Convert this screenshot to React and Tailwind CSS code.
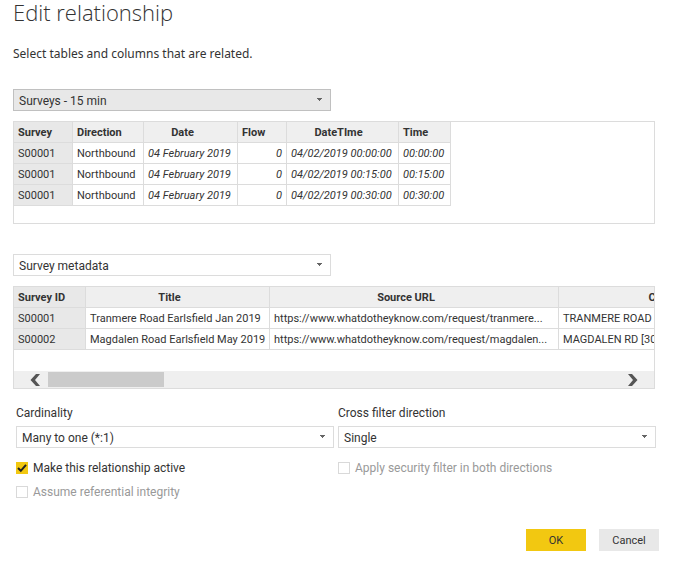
import React, { useState } from "react";
import clsx from "clsx";

const surveyColumns = [
  { name: "Survey", width: "w-[59px]", head: "text-left" },
  { name: "Direction", width: "w-[71px]", head: "text-left" },
  { name: "Date", width: "w-[94px]", head: "text-center pr-5" },
  { name: "Flow", width: "w-[49px]", head: "text-left", cell: "text-right" },
  { name: "DateTIme", width: "w-[112px]", head: "text-center pr-3" },
  { name: "Time", width: "w-[52px]", head: "text-left" },
];

const surveyRows = [
  ["S00001", "Northbound", "04 February 2019", "0", "04/02/2019 00:00:00", "00:00:00"],
  ["S00001", "Northbound", "04 February 2019", "0", "04/02/2019 00:15:00", "00:15:00"],
  ["S00001", "Northbound", "04 February 2019", "0", "04/02/2019 00:30:00", "00:30:00"],
];

const metadataColumns = [
  { name: "Survey ID", width: "w-[72px]", head: "text-left" },
  { name: "Title", width: "w-[184px]", head: "text-center pr-5" },
  { name: "Source URL", width: "w-[289px]", head: "text-center pr-5" },
  { name: "Comments", width: "w-[234px]", head: "text-center" },
];

const metadataRows = [
  ["S00001", "Tranmere Road Earlsfield Jan 2019", "https://www.whatdotheyknow.com/request/tranmere...", "TRANMERE ROAD [30 MPH]"],
  ["S00002", "Magdalen Road Earlsfield May 2019", "https://www.whatdotheyknow.com/request/magdalen...", "MAGDALEN RD [30 MPH]"],
];

function Select({ id, options, label, active }) {
  return (
    <div className="relative">
      <select
        id={id}
        aria-label={label}
        className={clsx(
          "block h-[22px] w-full appearance-none rounded-none border pl-[5px] pr-6 pt-px text-[12px] leading-5 outline-none",
          active ? "border-[#c0c0c0] bg-[#e8e8e8]" : "border-[#dcdcdc] bg-white"
        )}
      >
        {options.map((o) => (
          <option key={o}>{o}</option>
        ))}
      </select>
      <svg viewBox="0 0 5 3" className="pointer-events-none absolute right-[9px] top-[9px] h-[3px] w-[5px]" fill="#666">
        <path d="M0 0h5v1H4v1H3v1H2V2H1V1H0z" />
      </svg>
    </div>
  );
}

function PreviewTable({ columns, rows, italicFrom = columns.length }) {
  return (
    <table className="w-px table-fixed border-separate border-spacing-0 text-[11px] leading-[18px]">
      <thead>
        <tr>
          {columns.map((c, i) => (
            <th
              key={c.name}
              className={clsx(
                "h-[21px] whitespace-nowrap border-b border-r border-[#dcdcdc] px-1 pb-0 pt-0.5 font-bold",
                i === 0 ? "bg-[#e8e8e8]" : "bg-[#efefef]",
                c.width,
                c.head
              )}
            >
              {c.name}
            </th>
          ))}
        </tr>
      </thead>
      <tbody>
        {rows.map((row, r) => (
          <tr key={r}>
            {row.map((value, i) => (
              <td
                key={i}
                className={clsx(
                  "h-[21px] whitespace-nowrap border-b border-r border-[#dcdcdc] px-1 pb-0 pt-0.5",
                  i === 0 && "bg-[#e8e8e8]",
                  i >= italicFrom && "italic",
                  columns[i].cell
                )}
              >
                {value}
              </td>
            ))}
          </tr>
        ))}
      </tbody>
    </table>
  );
}

function ScrollBar() {
  return (
    <div className="flex h-[17px] items-center bg-[#efefef] px-4">
      <button aria-label="Scroll left" className="flex w-[18px] shrink-0">
        <svg viewBox="0 0 10 12" className="h-3 w-2.5" fill="#555">
          <path d="M6 0h4L5 6l5 6H6L0.500 6z" />
        </svg>
      </button>
      <div className="flex-1">
        <div className="h-[15px] w-1/5 bg-[#cbcbcb]" />
      </div>
      <button aria-label="Scroll right" className="flex shrink-0">
        <svg viewBox="0 0 10 12" className="h-3 w-2.5" fill="#555">
          <path d="M4 0H0l5 6-5 6h4l5.500-6z" />
        </svg>
      </button>
    </div>
  );
}

function CheckOption({ label, disabled, defaultChecked = false }) {
  const [checked, setChecked] = useState(defaultChecked);
  return (
    <label className={clsx("flex h-6 items-center gap-[5px] text-[12px]", disabled && "text-[#999]")}>
      <span className="relative flex">
        <input
          type="checkbox"
          checked={checked}
          disabled={disabled}
          onChange={(e) => setChecked(e.target.checked)}
          className="size-3 appearance-none border border-[#d9d9d9] bg-white checked:border-[#f2c811] checked:bg-[#f2c811]"
        />
        {checked && (
          <svg viewBox="0 0 12 12" className="pointer-events-none absolute inset-0 size-3" fill="none" stroke="#222" strokeWidth="2">
            <path d="M2 6l2.800 2.800L10 2.800" />
          </svg>
        )}
      </span>
      {label}
    </label>
  );
}

export default function App() {
  return (
    <div className="bg-white pl-[13px] pr-[19px] font-[Roboto,'Noto_Sans',sans-serif] text-[#333]">
      <h1 className="font-['Open_Sans','Noto_Sans',sans-serif] text-[22px] font-light leading-6">Edit relationship</h1>
      <p className="mt-5 font-['Noto_Sans',sans-serif] text-[12px] leading-5">Select tables and columns that are related.</p>

      <section className="mt-[25px]">
        <div className="grid grid-cols-2 gap-1.5">
          <Select label="First table" options={["Surveys - 15 min", "Survey metadata"]} active />
        </div>
        <div className="mt-2.5 h-[103px] overflow-hidden border border-[#dcdcdc]">
          <PreviewTable columns={surveyColumns} rows={surveyRows} italicFrom={2} />
        </div>
      </section>

      <section className="mt-[30px]">
        <div className="grid grid-cols-2 gap-1.5">
          <Select label="Second table" options={["Survey metadata", "Surveys - 15 min"]} />
        </div>
        <div className="mt-2.5 flex h-[103px] flex-col justify-between overflow-hidden border border-[#dcdcdc]">
          <div className="overflow-hidden">
            <PreviewTable columns={metadataColumns} rows={metadataRows} />
          </div>
          <ScrollBar />
        </div>
      </section>

      <div className="-mr-px ml-[3px] mt-3.5 grid grid-cols-2 gap-1">
        <div>
          <label htmlFor="cardinality" className="mb-[3px] block text-[12px] leading-5">Cardinality</label>
          <Select id="cardinality" options={["Many to one (*:1)", "One to one (1:1)", "One to many (1:*)"]} />
          <div className="mt-2">
            <CheckOption label="Make this relationship active" defaultChecked />
            <CheckOption label="Assume referential integrity" disabled />
          </div>
        </div>
        <div>
          <label htmlFor="direction" className="mb-[3px] block text-[12px] leading-5">Cross filter direction</label>
          <Select id="direction" options={["Single", "Both"]} />
          <div className="mt-2">
            <CheckOption label="Apply security filter in both directions" disabled />
          </div>
        </div>
      </div>

      <div className="-mr-1 mt-[25px] flex justify-end gap-[13px] text-[11px]">
        <button className="h-[22px] w-[60px] bg-[#f2c811] pt-0.5">OK</button>
        <button className="h-[22px] w-[60px] bg-[#e8e8e8] pt-0.5">Cancel</button>
      </div>
    </div>
  );
}
